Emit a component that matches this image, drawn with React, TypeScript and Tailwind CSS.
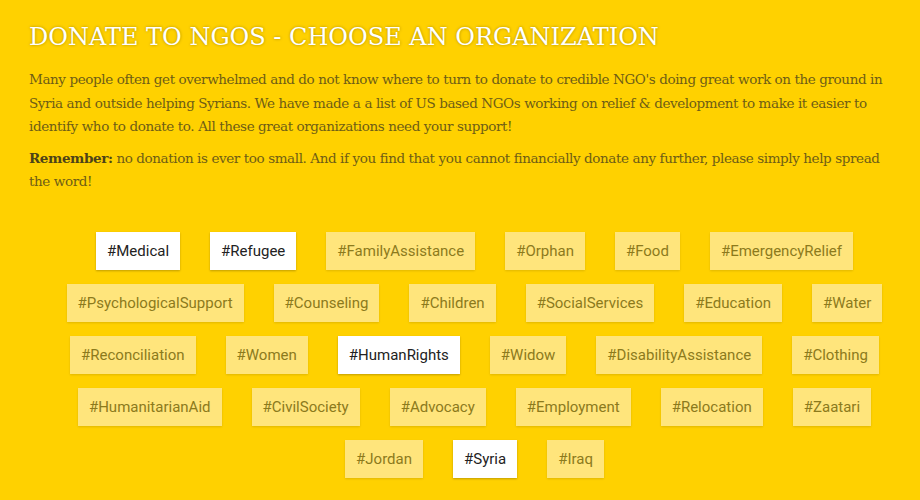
import React from "react";

type Tag = { label: string; active?: boolean };

const rows: Tag[][] = [
  [
    { label: "Medical", active: true },
    { label: "Refugee", active: true },
    { label: "FamilyAssistance" },
    { label: "Orphan" },
    { label: "Food" },
    { label: "EmergencyRelief" },
  ],
  [
    { label: "PsychologicalSupport" },
    { label: "Counseling" },
    { label: "Children" },
    { label: "SocialServices" },
    { label: "Education" },
    { label: "Water" },
  ],
  [
    { label: "Reconciliation" },
    { label: "Women" },
    { label: "HumanRights", active: true },
    { label: "Widow" },
    { label: "DisabilityAssistance" },
    { label: "Clothing" },
  ],
  [
    { label: "HumanitarianAid" },
    { label: "CivilSociety" },
    { label: "Advocacy" },
    { label: "Employment" },
    { label: "Relocation" },
    { label: "Zaatari" },
  ],
  [{ label: "Jordan" }, { label: "Syria", active: true }, { label: "Iraq" }],
];

function TagChip({ label, active }: Tag) {
  return (
    <button
      className={
        active
          ? "mx-[15px] h-[38px] px-[11px] bg-white text-[#222222] text-[15px] leading-[38px] shadow-[0_1px_2px_rgba(0,0,0,0.25)] font-['Roboto',sans-serif]"
          : "mx-[15px] h-[38px] px-[11px] bg-[#ffe57c] text-[#8c7a1c] text-[15px] leading-[38px] shadow-[0_1px_2px_rgba(0,0,0,0.12)] font-['Roboto',sans-serif]"
      }
    >
      #{label}
    </button>
  );
}

export default function App() {
  return (
    <div className="w-[920px] h-[500px] bg-[#ffd100] overflow-hidden">
      <div className="px-[29px] pt-[20px]">
        <h1 className="text-white text-[24px] leading-[34px] font-normal uppercase font-['DejaVu_Serif',serif] [text-shadow:0_0_3px_rgba(0,0,0,0.35)]">
          Donate to NGOs - Choose an Organization
        </h1>
        <div className="mt-[14px] text-[#6e5d16] text-[13.5px] tracking-[-0.4px] leading-[23.5px] font-['DejaVu_Serif',serif] whitespace-nowrap">
          <p>
            Many people often get overwhelmed and do not know where to turn to donate to credible NGO's
            doing great work on the ground in
            <br />
            Syria and outside helping Syrians. We have made a a list of US based NGOs working on relief
            &amp; development to make it easier to
            <br />
            identify who to donate to. All these great organizations need your support!
          </p>
          <p className="mt-[8px]">
            <strong className="font-bold text-[#4d4318]">Remember:</strong> no donation is ever too
            small. And if you find that you cannot financially donate any further, please simply help
            spread
            <br />
            the word!
          </p>
        </div>
      </div>
      <div className="pl-[29px] pt-[38px] flex flex-col gap-[14px]">
        {rows.map((row, i) => (
          <div key={i} className="flex justify-center">
            {row.map((t) => (
              <TagChip key={t.label} {...t} />
            ))}
          </div>
        ))}
      </div>
    </div>
  );
}
